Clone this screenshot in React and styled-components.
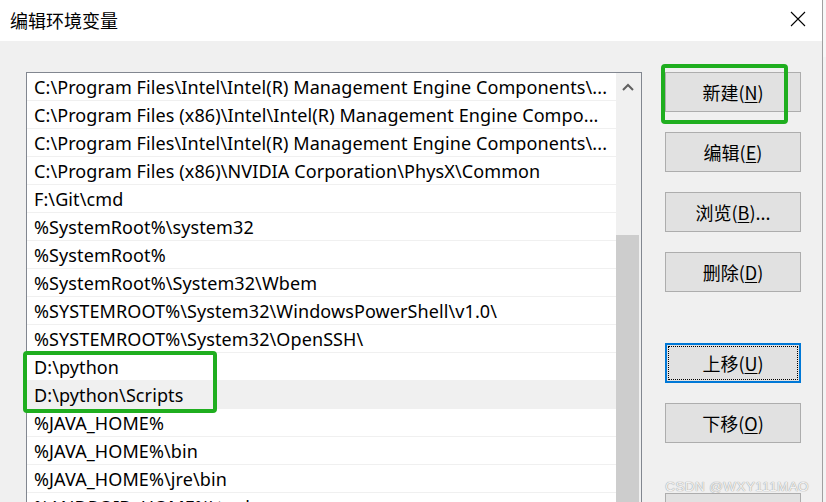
import React from 'react'
import styled, { createGlobalStyle } from 'styled-components'

const Global = createGlobalStyle`
  html, body { margin: 0; padding: 0; background: #f3f3f3; overflow: hidden; }
  body { font-family: "Noto Sans", "Noto Sans CJK SC", sans-serif; }
`

const Page = styled.div`
  display: flex;
  width: 826px;
  height: 502px;
  overflow: hidden;
`

const Window = styled.div`
  width: 823px;
  height: 502px;
  display: flex;
  flex-direction: column;
  background: #f0f0f0;
  border-right: 1px solid #a0a0a0;
  box-sizing: border-box;
`

const Edge = styled.div`
  flex: 1;
  background: #f3f3f3;
  border-top: 57px solid #f7f7f7;
`

const TitleBar = styled.div`
  height: 41px;
  flex: none;
  background: #fff;
  display: flex;
  align-items: center;
  justify-content: space-between;
  padding: 0 16px 0 10px;
`

const Title = styled.div`
  font-family: "Noto Sans CJK SC", sans-serif;
  font-size: 18px;
  color: #000;
  white-space: nowrap;
  margin-top: -2px;
`

const Close = styled.svg`
  width: 16px;
  height: 16px;
  margin-top: -4px;
`

const Body = styled.div`
  display: flex;
  gap: 23px;
  padding: 31px 0 0 26px;
  min-height: 0;
  flex: 1;
`

const ListBox = styled.div`
  position: relative;
  width: 616px;
  height: 460px;
  flex: none;
  display: flex;
  background: #fff;
  border: 1px solid #828790;
  box-sizing: border-box;
`

const Rows = styled.div`
  flex: 1;
  min-width: 0;
  display: flex;
  flex-direction: column;
`

const Row = styled.div`
  height: 28px;
  flex: none;
  box-sizing: border-box;
  border-bottom: 1px solid #f0f0f0;
  padding-left: 7px;
  display: flex;
  align-items: center;
  font-size: 18px;
  letter-spacing: 0.1px;
  color: #000;
  white-space: nowrap;
  overflow: hidden;
  background: ${p => (p.$selected ? '#f0f0f0' : '#fff')};
`

const ScrollBar = styled.div`
  width: 25px;
  flex: none;
  display: flex;
  flex-direction: column;
  background: #f0f0f0;
`

const ArrowCell = styled.div`
  height: 27px;
  display: flex;
  align-items: center;
  justify-content: center;
  padding-right: 2px;
`

const Track = styled.div`
  height: 135px;
`

const Thumb = styled.div`
  flex: 1;
  background: #cdcdcd;
  margin-right: 2px;
`

const Buttons = styled.div`
  display: flex;
  flex-direction: column;
  width: 136px;
`

const Btn = styled.div`
  position: relative;
  height: 40px;
  box-sizing: border-box;
  margin-top: ${p => p.$gap || 0}px;
  background: #e1e1e1;
  border: ${p => (p.$focused ? '2px solid #0078d7' : '1px solid #adadad')};
  display: flex;
  align-items: center;
  justify-content: center;
  font-family: "Noto Sans CJK SC", sans-serif;
  font-size: 18px;
  color: #000;
  flex: none;
  &::after {
    content: '';
    display: ${p => (p.$focused ? 'block' : 'none')};
    position: absolute;
    inset: 1px;
    border: 1px dotted #000;
  }
  u { text-underline-offset: 2px; }
`

const Mark = styled.div`
  position: absolute;
  border: 4px solid #1fae1f;
  border-radius: 4px;
  pointer-events: none;
`

const NewMark = styled(Mark)`
  left: -5px;
  top: -9px;
  width: 119px;
  height: 52px;
`

const PyMark = styled(Mark)`
  left: -4px;
  top: 278px;
  width: 186px;
  height: 54px;
`

const Watermark = styled.div`
  position: absolute;
  right: 17px;
  bottom: 8px;
  font-family: "Liberation Sans", sans-serif;
  font-size: 13.5px;
  letter-spacing: 0.4px;
  color: #f2f2f2;
  text-shadow: 0 0 1px #a0a0a0, 0 0 1px #a0a0a0;
`

const paths = [
  'C:\\Program Files\\Intel\\Intel(R) Management Engine Components\\...',
  'C:\\Program Files (x86)\\Intel\\Intel(R) Management Engine Compo...',
  'C:\\Program Files\\Intel\\Intel(R) Management Engine Components\\...',
  'C:\\Program Files (x86)\\NVIDIA Corporation\\PhysX\\Common',
  'F:\\Git\\cmd',
  '%SystemRoot%\\system32',
  '%SystemRoot%',
  '%SystemRoot%\\System32\\Wbem',
  '%SYSTEMROOT%\\System32\\WindowsPowerShell\\v1.0\\',
  '%SYSTEMROOT%\\System32\\OpenSSH\\',
  'D:\\python',
  'D:\\python\\Scripts',
  '%JAVA_HOME%',
  '%JAVA_HOME%\\bin',
  '%JAVA_HOME%\\jre\\bin',
  '%ANDROID_HOME%\\tools',
]

const Label = ({ text, k, tail = '' }) => (
  <span>{text}(<u>{k}</u>){tail}</span>
)

export default function App() {
  return (
    <Page>
      <Global />
      <Window>
        <TitleBar>
          <Title>编辑环境变量</Title>
          <Close viewBox="0 0 16 16">
            <path d="M1 1 L15 15 M15 1 L1 15" stroke="#000" strokeWidth="1.1" fill="none" />
          </Close>
        </TitleBar>
        <Body>
          <ListBox>
            <Rows>
              {paths.map((p, i) => (
                <Row key={i} $selected={i === 11}>{p}</Row>
              ))}
            </Rows>
            <ScrollBar>
              <ArrowCell>
                <svg width="12" height="8" viewBox="0 0 12 8">
                  <path d="M1 7 L6 2 L11 7" stroke="#606060" strokeWidth="2" fill="none" />
                </svg>
              </ArrowCell>
              <Track />
              <Thumb />
            </ScrollBar>
            <PyMark />
          </ListBox>
          <Buttons>
            <Btn><Label text="新建" k="N" /><NewMark /></Btn>
            <Btn $gap={20}><Label text="编辑" k="E" /></Btn>
            <Btn $gap={20}><Label text="浏览" k="B" tail="..." /></Btn>
            <Btn $gap={20}><Label text="删除" k="D" /></Btn>
            <Btn $gap={51} $focused><Label text="上移" k="U" /></Btn>
            <Btn $gap={20}><Label text="下移" k="O" /></Btn>
            <Btn $gap={50} />
          </Buttons>
        </Body>
      </Window>
      <Edge />
      <Watermark>CSDN @WXY111MAO</Watermark>
    </Page>
  )
}
